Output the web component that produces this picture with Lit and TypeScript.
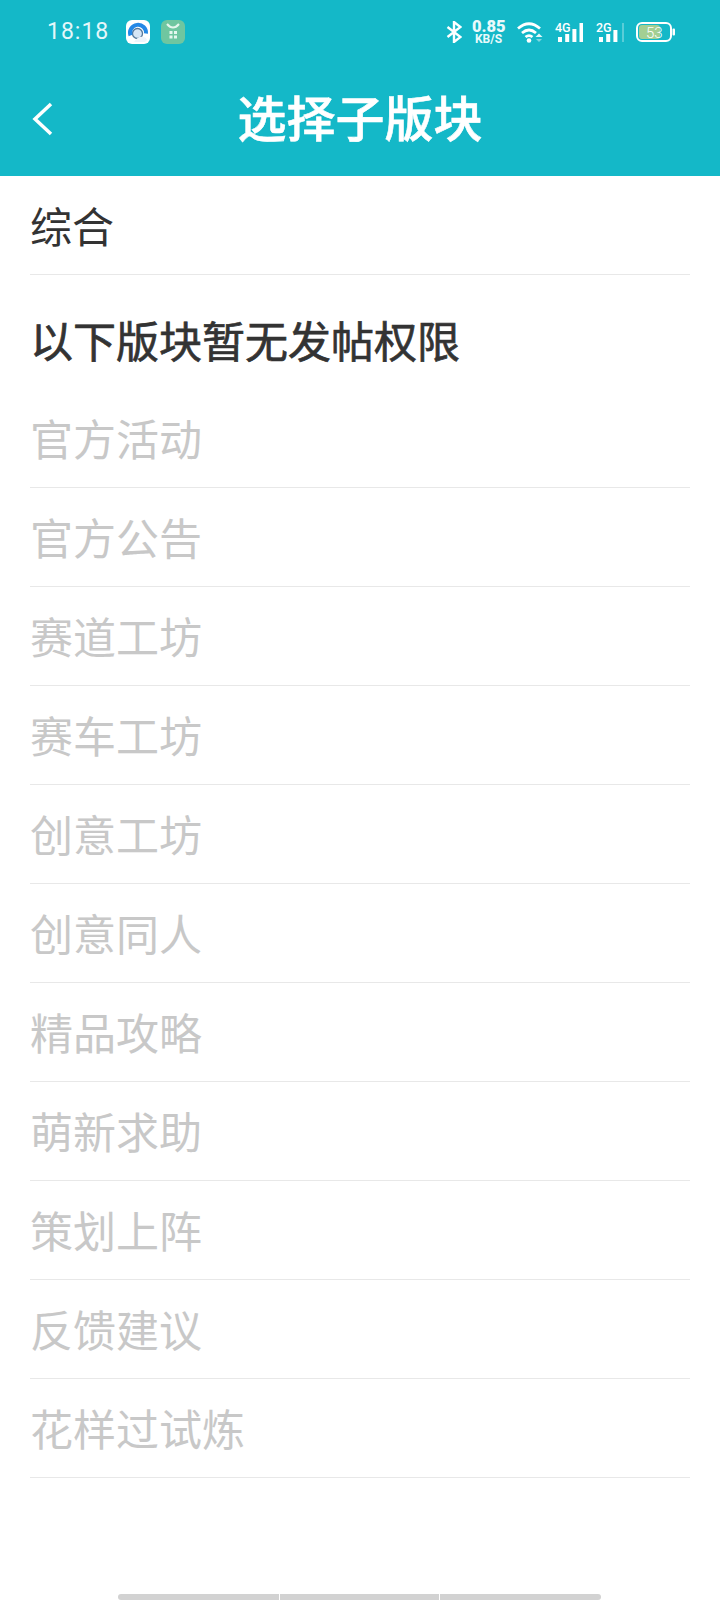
import { LitElement, html, css, svg } from "lit";
import { customElement } from "lit/decorators.js";

const BOARDS = [
  "官方活动", "官方公告", "赛道工坊", "赛车工坊", "创意工坊",
  "创意同人", "精品攻略", "萌新求助", "策划上阵", "反馈建议", "花样过试炼",
];

// signal icon: small label on top of the short bars, last bar full height
const signal = (label: string, hs: number[], lastDim: boolean) => svg`
  <text x="1" y="10.500" font-family="Roboto, sans-serif" font-size="12.500" font-weight="500" fill="#fff">${label}</text>
  ${hs.map((h, i) => svg`<rect x=${4 + i * 7.2} y=${21 - h} width="4" height=${h} fill="#fff"></rect>`)}
  <rect x=${lastDim ? 27 : 25.500} y="2" width=${lastDim ? 2 : 4} height="19" fill="#fff" opacity=${lastDim ? 0.3 : 1}></rect>
`;

@customElement("app-root")
export class AppRoot extends LitElement {
  static styles = css`
    :host {
      display: block;
      width: 720px;
      height: 1600px;
      background: #fff;
      position: relative;
      overflow: hidden;
      font-family: "Noto Sans CJK SC", "Roboto", sans-serif;
    }
    .top {
      background: #14b8c8;
      height: 176px;
      color: #fff;
    }
    .status {
      height: 60px;
      display: flex;
      align-items: center;
      padding: 4px 45px 0 47px;
      box-sizing: border-box;
    }
    .time {
      font-family: "Roboto", sans-serif;
      font-size: 23px;
      letter-spacing: 1px;
      color: #e4f7fa;
      width: 79px;
      margin-bottom: 2px;
    }
    .app-a { margin-right: 11px; }
    .spacer { flex: 1; }
    .speed {
      font-family: "Roboto", sans-serif;
      font-weight: 700;
      text-align: center;
      width: 33px;
      margin: 0 12px 0 10px;
      color: #eafafb;
    }
    .speed b { display: block; font-size: 16.500px; line-height: 14px; }
    .speed i { display: block; font-size: 12px; line-height: 10px; font-style: normal; }
    .wifi { margin-right: 11px; }
    .sig { margin-right: 12px; }
    .bar {
      height: 116px;
      display: flex;
      align-items: center;
      justify-content: center;
      position: relative;
      padding-bottom: 4px;
      box-sizing: border-box;
    }
    .back {
      position: absolute;
      left: 32px;
      top: 42px;
    }
    h1 {
      margin: 0;
      font-size: 49px;
      font-weight: 500;
      line-height: 60px;
      -webkit-text-stroke: 0.6px #fff;
    }
    .row {
      margin: 0 30px;
      height: 99px;
      box-sizing: border-box;
      border-bottom: 1px solid #e8e8e8;
      display: flex;
      align-items: center;
      font-size: 43px;
      color: #333;
      padding-bottom: 2px;
    }
    .row.main { font-size: 42px; }
    .heading {
      margin: 0 30px;
      height: 114px;
      display: flex;
      align-items: center;
      font-size: 43px;
      font-weight: 400;
      -webkit-text-stroke: 0.7px #333;
      color: #333;
      padding-top: 14px;
      box-sizing: border-box;
    }
    .row.off { color: #c8c8c8; }
    .nav {
      position: absolute;
      left: 118px;
      bottom: 0;
      width: 483px;
      height: 6px;
      display: flex;
      gap: 1px;
      border-radius: 3px;
      overflow: hidden;
    }
    .nav span { flex: 1; background: #d2d2d2; }
    .nav span:nth-child(2) { flex: 0 0 159px; }
  `;

  render() {
    return html`
      <div class="top">
        <div class="status">
          <span class="time">18:18</span>
          <svg class="app-a" width="24" height="24" viewBox="0 0 24 24">
            <rect width="24" height="24" rx="6" fill="#fff"></rect>
            <circle cx="11.500" cy="13.500" r="5" fill="#d6e5f5" stroke="#56789a" stroke-width="1.300"></circle>
            <path d="M4.500 15.500A8 8 0 1 1 20 13.500" fill="none" stroke="#2488e6" stroke-width="4"></path>
            <path d="M8 22q4-6 9-5 3 0 4 3l-2 2z" fill="#eef4fb"></path>
          </svg>
          <svg width="24" height="24" viewBox="0 0 24 24">
            <rect width="24" height="24" rx="6" fill="#6fc6a0"></rect>
            <path d="M6 4q6 7 12 0" fill="none" stroke="#e6f7ee" stroke-width="2"></path>
            <rect x="8.500" y="11" width="3" height="3" fill="#e6f7ee"></rect>
            <rect x="13" y="11" width="3" height="3" fill="#e6f7ee"></rect>
            <rect x="8.500" y="15.500" width="3" height="3" fill="#e6f7ee"></rect>
            <rect x="13" y="15.500" width="3" height="3" fill="#e6f7ee"></rect>
          </svg>
          <span class="spacer"></span>
          <svg width="16" height="22" viewBox="0 0 16 22">
            <path d="M1.500 6l13 10L8 21V1l6.500 5L1.500 16" fill="none" stroke="#fff" stroke-width="2.400"></path>
          </svg>
          <span class="speed"><b>0.85</b><i>KB/S</i></span>
          <svg class="wifi" width="26" height="22" viewBox="0 0 26 22">
            <g fill="none" stroke="#fff" stroke-width="2.800">
              <path d="M1 7.500q11-9.500 22 0"></path>
              <path d="M5 12q7-6 14 0"></path>
              <path d="M8.500 16q3.500-2.800 7 0"></path>
            </g>
            <circle cx="12" cy="19.500" r="2.300" fill="#fff"></circle>
            <path d="M22 12.500l3.500 3.500h-7z" fill="#e4f8fa"></path>
            <path d="M22 21l-3-3h6z" fill="#7fd5df"></path>
          </svg>
          <svg class="sig" width="29" height="22" viewBox="0 0 29 22">
            ${signal("4G", [5, 8, 13], false)}
          </svg>
          <svg class="sig" width="29" height="22" viewBox="0 0 29 22">
            ${signal("2G", [5, 8, 12], true)}
          </svg>
          <svg width="39" height="20" viewBox="0 0 39 20">
            <rect x="3" y="3" width="21" height="14" rx="3" fill="#a3cf93"></rect>
            <rect x="1" y="1" width="34" height="18" rx="5" fill="none" stroke="#fff" stroke-width="2"></rect>
            <rect x="36.500" y="6.500" width="2.500" height="7" rx="1" fill="#fff"></rect>
            <text x="10" y="15.500" font-family="Roboto, sans-serif" font-size="15" font-weight="300" fill="#fff">53</text>
          </svg>
        </div>
        <div class="bar">
          <svg class="back" width="22" height="34" viewBox="0 0 22 34">
            <path d="M19 2L3 17l16 15" fill="none" stroke="#fff" stroke-width="3.500"></path>
          </svg>
          <h1>选择子版块</h1>
        </div>
      </div>
      <div class="row main">综合</div>
      <div class="heading">以下版块暂无发帖权限</div>
      ${BOARDS.map((b) => html`<div class="row off">${b}</div>`)}
      <div class="nav"><span></span><span></span><span></span></div>
    `;
  }
}
